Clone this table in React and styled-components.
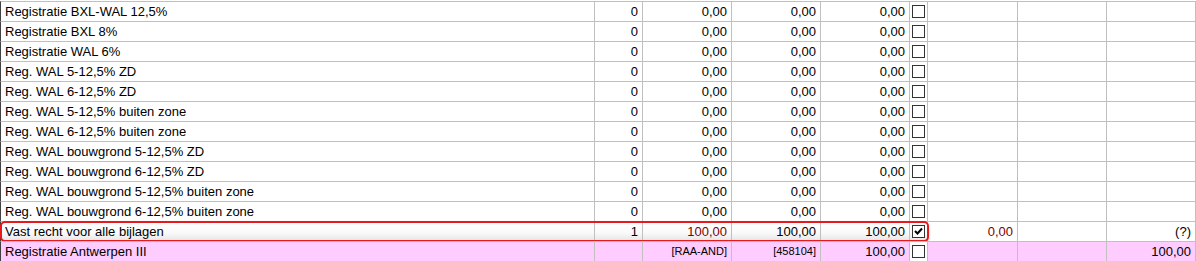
import React from "react";
import styled, { createGlobalStyle, css } from "styled-components";

const GlobalStyle = createGlobalStyle`
  html, body {
    margin: 0;
    padding: 0;
    background: #ffffff;
  }
  body {
    font-family: "Liberation Sans", Arial, sans-serif;
  }
`;

const COLUMNS = "593px 47px 88px 88px 88px 17px 89px 88px 88px";

const rows = [
  "Registratie BXL-WAL 12,5%",
  "Registratie BXL 8%",
  "Registratie WAL 6%",
  "Reg. WAL 5-12,5% ZD",
  "Reg. WAL 6-12,5% ZD",
  "Reg. WAL 5-12,5% buiten zone",
  "Reg. WAL 6-12,5% buiten zone",
  "Reg. WAL bouwgrond 5-12,5% ZD",
  "Reg. WAL bouwgrond 6-12,5% ZD",
  "Reg. WAL bouwgrond 5-12,5% buiten zone",
  "Reg. WAL bouwgrond 6-12,5% buiten zone",
];

function App() {
  return (
    <>
      <GlobalStyle />
      <Sheet>
        {rows.map((label) => (
          <Row key={label}>
            <Cell>{label}</Cell>
            <Cell $num>0</Cell>
            <Cell $num>0,00</Cell>
            <Cell $num>0,00</Cell>
            <Cell $num>0,00</Cell>
            <BoxCell>
              <CheckBox />
            </BoxCell>
            <Cell />
            <Cell />
            <Cell />
          </Row>
        ))}

        <Row $selected>
          <Cell $shade>Vast recht voor alle bijlagen</Cell>
          <Cell $num $shade>1</Cell>
          <Cell $num $shade $tone="#800000">100,00</Cell>
          <Cell $num $shade>100,00</Cell>
          <Cell $num $shade>100,00</Cell>
          <BoxCell $shade>
            <CheckBox>
              <svg width="11" height="11" viewBox="0 0 11 11">
                <path d="M2 5 L4.5 7.5 L9 2.5" fill="none" stroke="#000" strokeWidth="2" />
              </svg>
            </CheckBox>
          </BoxCell>
          <Cell $num $tone="#800000">0,00</Cell>
          <Cell />
          <Cell $num>(?)</Cell>
        </Row>

        <Row>
          <Cell $pink>Registratie Antwerpen III</Cell>
          <Cell $pink />
          <Cell $num $pink $small>[RAA-AND]</Cell>
          <Cell $num $pink $small>[458104]</Cell>
          <Cell $num $pink>100,00</Cell>
          <BoxCell>
            <CheckBox />
          </BoxCell>
          <Cell $pink />
          <Cell $pink />
          <Cell $num $pink>100,00</Cell>
        </Row>
      </Sheet>
    </>
  );
}

export default App;

const Sheet = styled.div`
  width: 1196px;
  height: 261px;
  overflow: hidden;
  padding-top: 1px;
  box-sizing: border-box;
`;

const Row = styled.div`
  position: relative;
  display: grid;
  grid-template-columns: ${COLUMNS};
  column-gap: 1px;
  height: 19px;
  background: #c0c0c0;
  border-top: 1px solid #c0c0c0;
  border-left: 1px solid #404040;
  border-right: 1px solid #c0c0c0;

  ${(props) =>
    props.$selected &&
    css`
      &::after {
        content: "";
        position: absolute;
        left: -1px;
        top: -1px;
        width: 929px;
        height: 21px;
        box-sizing: border-box;
        border: 2px solid #e8191c;
        border-radius: 5px;
        box-shadow: 0 1px 2px rgba(0, 0, 0, 0.25);
        pointer-events: none;
      }
    `}
`;

const Cell = styled.div`
  background: ${(props) =>
    props.$pink
      ? "#ffccff"
      : props.$shade
      ? "linear-gradient(#ffffff 0%, #fafafa 55%, #e6e6e6 100%)"
      : "#ffffff"};
  color: ${(props) => props.$tone || "#000000"};
  font-size: ${(props) => (props.$small ? "11px" : "13px")};
  line-height: 19px;
  height: 19px;
  white-space: nowrap;
  overflow: hidden;
  text-align: ${(props) => (props.$num ? "right" : "left")};
  padding: ${(props) => (props.$num ? "0 4px 0 0" : "0 0 0 4px")};
`;

const BoxCell = styled.div`
  display: flex;
  align-items: center;
  padding-left: 2px;
  background: ${(props) =>
    props.$shade ? "linear-gradient(#ffffff 0%, #fafafa 55%, #e6e6e6 100%)" : "#ffffff"};
`;

const CheckBox = styled.div`
  width: 13px;
  height: 13px;
  box-sizing: border-box;
  border: 1px solid #333333;
  background: #ffffff;
  display: flex;
  align-items: center;
  justify-content: center;
`;
